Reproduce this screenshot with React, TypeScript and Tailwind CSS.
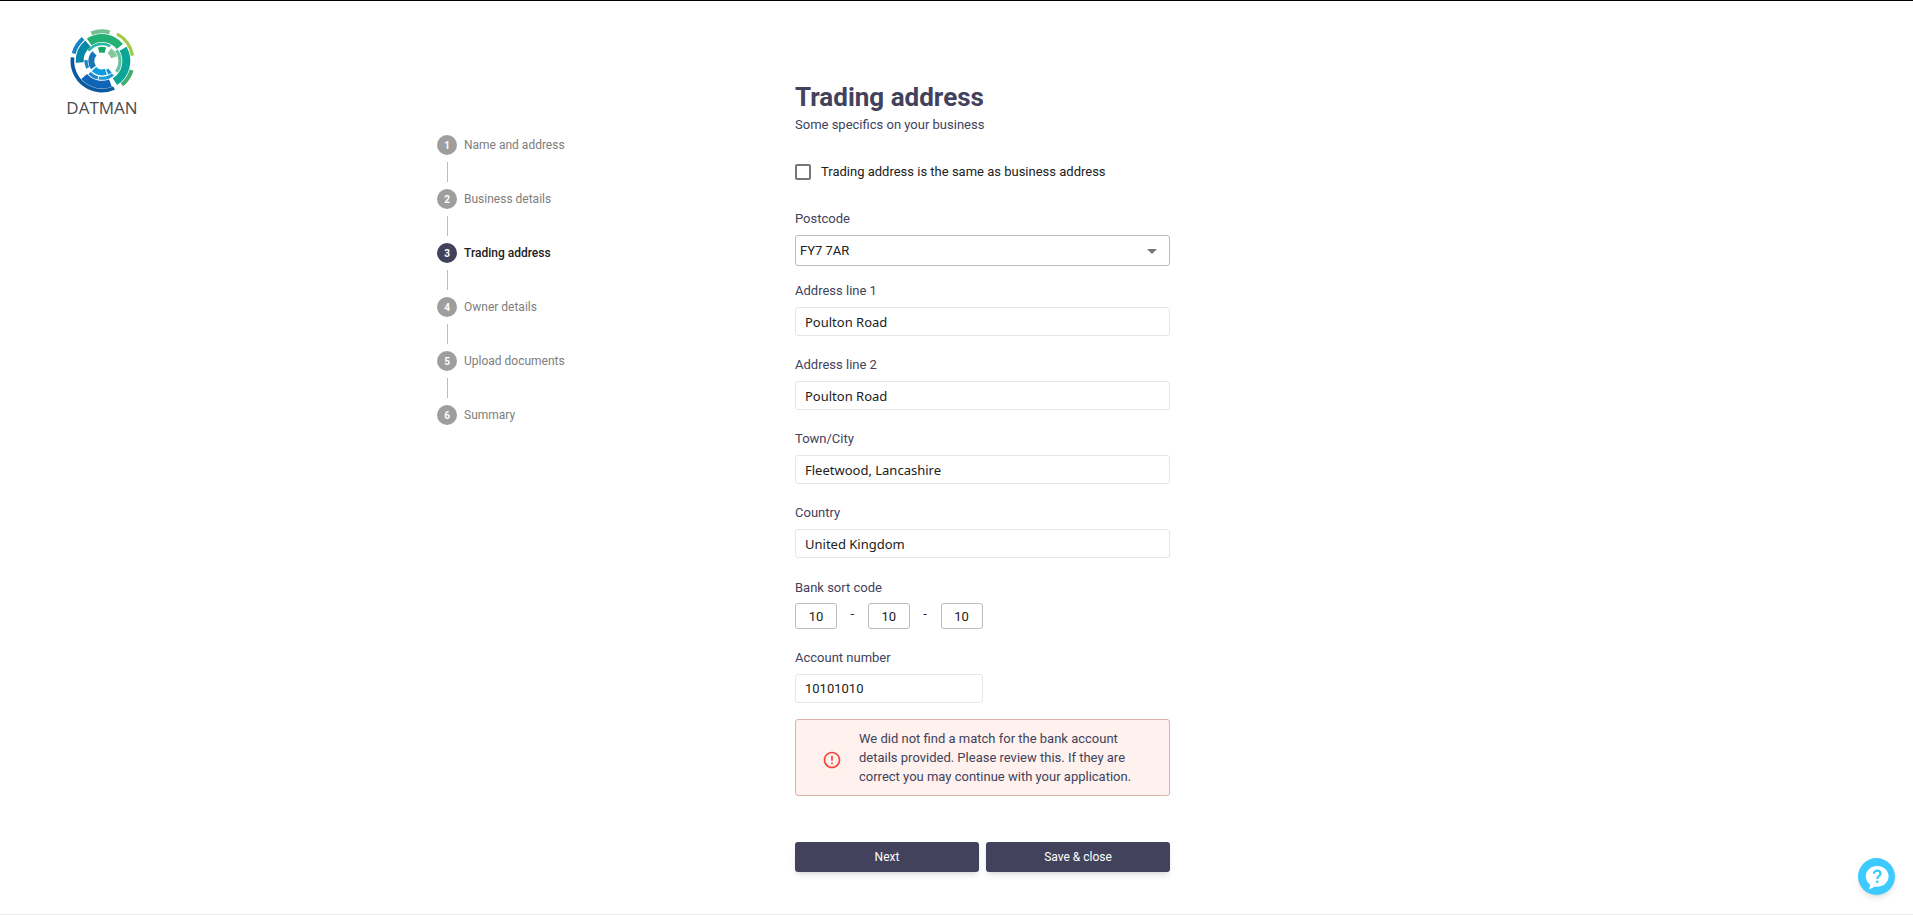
import React, { useState } from "react";

const STEPS = [
  "Name and address",
  "Business details",
  "Trading address",
  "Owner details",
  "Upload documents",
  "Summary",
];

const ACTIVE_STEP = 2;

/* start angle, end angle (clockwise from twelve o'clock), radius, stroke width, colour */
type Arc = [number, number, number, number, string];

const LOGO_ARCS: Arc[] = [
  [-21, 15, 89, 12, "#74c08f"],
  [29, 80, 93, 10, "#a6c94c"],
  [-34, 51, 69, 24, "#22b073"],
  [107, 140, 93, 12, "#3fae72"],
  [60, 148, 73, 24, "#0aa596"],
  [156, 277, 89, 11, "#0b5aa0"],
  [159, 229, 71, 23, "#0f64b8"],
  [266, 321, 67, 24, "#0587a8"],
  [285, 320, 88, 12, "#1584c4"],
  [307, 389, 51, 8, "#27b7a2"],
  [53, 127, 54, 10, "#68c3a0"],
  [141, 191, 52, 9, "#1c9bd8"],
  [194, 226, 52, 10, "#1a86cc"],
  [244, 273, 48, 10, "#1b83c8"],
  [233, 315, 32, 18, "#1876b8"],
  [160, 225, 34, 18, "#0d9ce0"],
  [140, 155, 37, 16, "#1590d2"],
  [343, 377, 34, 17, "#16a766"],
  [36, 73, 38, 19, "#85c79b"],
];

function arcPath(start: number, end: number, r: number) {
  const point = (deg: number) => {
    const a = (deg * Math.PI) / 180;
    return `${(99 + r * Math.sin(a)).toFixed(1)} ${(99 - r * Math.cos(a)).toFixed(1)}`;
  };
  return `M${point(start)}A${r} ${r} 0 ${end - start > 180 ? 1 : 0} 1 ${point(end)}`;
}

function Logo() {
  return (
    <a href="#" className="flex w-[68px] flex-col items-center">
      <svg viewBox="0 0 198 198" className="size-[66px]" fill="none" aria-hidden="true">
        {LOGO_ARCS.map(([start, end, r, width, color]) => (
          <path key={`${start}-${r}`} d={arcPath(start, end, r)} stroke={color} strokeWidth={width} />
        ))}
      </svg>
      <span className="mt-[2px] font-['Open_Sans',sans-serif] text-[17px] leading-6 font-medium text-[#4a4b4d]">
        DATMAN
      </span>
    </a>
  );
}

function Stepper() {
  return (
    <ol className="flex flex-col">
      {STEPS.map((step, i) => (
        <li key={step} className="flex flex-col">
          {i > 0 && <span className="my-[7px] ml-[10px] h-5 w-px bg-[#bdbdbd]" />}
          <span className="flex items-center gap-[7px]">
            <span
              className={`flex size-5 items-center justify-center rounded-full text-[10px] font-bold text-white ${
                i === ACTIVE_STEP ? "bg-[#42425c]" : "bg-[#9e9e9e]"
              }`}
            >
              {i + 1}
            </span>
            <span
              className={`text-xs leading-5 ${
                i === ACTIVE_STEP ? "font-medium text-[#212121]" : "text-[#7d7d7d]"
              }`}
            >
              {step}
            </span>
          </span>
        </li>
      ))}
    </ol>
  );
}

function Field({ id, label, value, narrow }: { id: string; label: string; value: string; narrow?: boolean }) {
  return (
    <div className={narrow ? "w-1/2" : "w-full"}>
      <label htmlFor={id} className="block text-[13px] leading-5">
        {label}
      </label>
      <input
        id={id}
        defaultValue={value}
        className={`mt-[6px] block h-[29px] w-full rounded-[3px] border border-[#e6e6e6] px-[9px] text-[13px] text-[#212121] ${
          narrow ? "" : "font-['Noto_Sans',sans-serif]"
        }`}
      />
    </div>
  );
}

function HelpButton() {
  return (
    <button
      type="button"
      aria-label="Help"
      className="fixed right-[18px] bottom-5 flex size-[37px] items-center justify-center rounded-full bg-[#3dcbff] shadow-md"
    >
      <svg viewBox="0 0 24 24" className="size-6" aria-hidden="true">
        <path
          d="M12.2 1C5.8 1 .8 5.600.8 11.300c0 3.500 1.700 6.300 4.300 8.100.1 1.500-.4 3.200-1.500 4.500 2.200-.1 4.300-1 5.700-2.500 1 .200 1.900.300 2.900.300 6.400 0 11.400-4.600 11.400-10.400S18.600 1 12.200 1Z"
          fill="#fff"
        />
        <path
          d="M9 8.700C9 6.800 10.300 5.600 12.200 5.600s3.300 1.200 3.300 2.900c0 2.500-3.200 2.600-3.200 5.500"
          fill="none"
          stroke="#3dcbff"
          strokeWidth="2.200"
        />
        <circle cx="12.300" cy="16.800" r="1.400" fill="#3dcbff" />
      </svg>
    </button>
  );
}

export default function App() {
  const [same, setSame] = useState(false);

  return (
    <div className="min-h-screen border-t border-b border-t-black border-b-[#ececec] bg-white font-[Roboto,sans-serif] text-[#42425c]">
      <div className="grid grid-cols-[1fr_minmax(0,1039px)_1fr]">
        <header className="pt-[27px] pl-[68px]">
          <Logo />
        </header>

        <main className="flex">
          <nav aria-label="Application progress" className="w-[358px] shrink-0 pt-[134px]">
            <Stepper />
          </nav>

          <form className="w-full max-w-[375px] pt-20" onSubmit={(e) => e.preventDefault()}>
            <h1 className="text-[26px] leading-8 font-bold">Trading address</h1>
            <p className="mt-[2px] text-[13px] leading-5">Some specifics on your business</p>

            <label className="mt-[27px] flex items-center gap-[10px] text-[13px] leading-5 text-[#212121]">
              <input
                type="checkbox"
                checked={same}
                onChange={(e) => setSame(e.target.checked)}
                className="size-4 appearance-none rounded-[2px] border-2 border-[#757575] checked:bg-[#42425c]"
              />
              Trading address is the same as business address
            </label>

            <div className="mt-[27px]">
              <label htmlFor="postcode" className="block text-[13px] leading-5">
                Postcode
              </label>
              <div className="relative mt-[6px]">
                <select
                  id="postcode"
                  className="block h-[31px] w-full appearance-none rounded-[3px] border border-[#bdbdbd] bg-white px-1 text-[13px] text-[#212121]"
                >
                  <option>FY7 7AR</option>
                </select>
                <svg
                  viewBox="0 0 10 5"
                  className="pointer-events-none absolute top-[14px] right-[13px] h-[5px] w-[10px]"
                  aria-hidden="true"
                >
                  <path d="M0 0h10L5 5z" fill="#757575" />
                </svg>
              </div>
            </div>

            <div className="mt-[15px] flex flex-col gap-[19px]">
              <Field id="line1" label="Address line 1" value="Poulton Road" />
              <Field id="line2" label="Address line 2" value="Poulton Road" />
              <Field id="town" label="Town/City" value="Fleetwood, Lancashire" />
              <Field id="country" label="Country" value="United Kingdom" />
            </div>

            <fieldset className="mt-5">
              <legend className="block text-[13px] leading-5">Bank sort code</legend>
              <div className="mt-[5px] flex w-1/2 items-center justify-between">
                {[1, 2, 3].map((part) => (
                  <React.Fragment key={part}>
                    {part > 1 && <span className="pb-1 text-[13px] leading-4 text-[#212121]">-</span>}
                    <input
                      aria-label={`Sort code part ${part}`}
                      defaultValue="10"
                      className="h-[26px] w-[42px] rounded-[3px] border border-[#bdbdbd] text-center text-[13px] text-[#212121]"
                    />
                  </React.Fragment>
                ))}
              </div>
            </fieldset>

            <div className="mt-[19px]">
              <Field id="account" label="Account number" value="10101010" narrow />
            </div>

            <div
              role="alert"
              className="mt-4 flex items-center gap-[17px] rounded-[3px] border border-[#e0b0aa] bg-[#fef1ee] py-[9px] pr-5 pl-[26px] text-[13px] leading-[19px]"
            >
              <svg viewBox="0 0 24 24" className="mt-1 size-5 shrink-0" aria-hidden="true">
                <path
                  fill="#f44336"
                  d="M11 15h2v2h-2zm0-8h2v6h-2zm.99-5C6.470 2 2 6.480 2 12s4.470 10 9.990 10C17.520 22 22 17.520 22 12S17.520 2 11.990 2zM12 20c-4.420 0-8-3.580-8-8s3.580-8 8-8 8 3.580 8 8-3.580 8-8 8z"
                />
              </svg>
              <p>
                We did not find a match for the bank account details provided. Please review this. If they are correct
                you may continue with your application.
              </p>
            </div>

            <div className="mt-[46px] grid grid-cols-2 gap-[7px] text-xs text-white">
              <button type="submit" className="h-[30px] rounded-[3px] bg-[#42425c] shadow-md">
                Next
              </button>
              <button type="button" className="h-[30px] rounded-[3px] bg-[#42425c] shadow-md">
                Save &amp; close
              </button>
            </div>
          </form>
        </main>
      </div>

      <HelpButton />
    </div>
  );
}
